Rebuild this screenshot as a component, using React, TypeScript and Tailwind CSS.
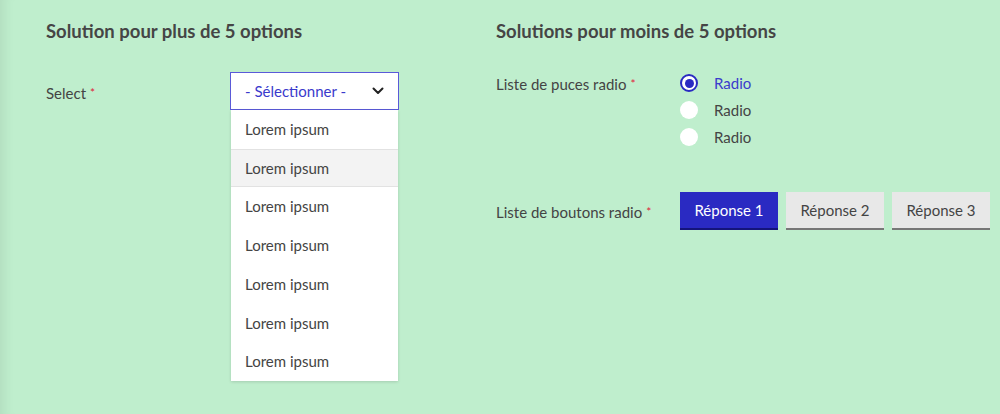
import React from "react";

const font = { fontFamily: "Lato, 'Noto Sans', sans-serif" };

function Req() {
  return <span className="text-[#e0233a] ml-1 text-[12px] align-top">*</span>;
}

export default function App() {
  const items = Array.from({ length: 7 });
  return (
    <div
      style={font}
      className="w-[1000px] h-[414px] bg-[#bfeecd] shadow-[inset_14px_0_12px_-10px_rgba(0,0,0,0.07)] text-[#444] flex overflow-hidden"
    >
      {/* Left column */}
      <div className="w-[450px] pl-[46px] pt-[20px] shrink-0">
        <h2 className="text-[18.5px] font-bold leading-[22px] text-[#454545]">Solution pour plus de 5 options</h2>
        <div className="flex mt-[30px]">
          <div className="w-[184px] pt-[12px] text-[15px] leading-[18px]">
            Select<Req />
          </div>
          <div className="w-[169px]">
            <div className="h-[38px] border border-[#5a5ad8] bg-white flex items-center justify-between pl-[14px] pr-[14px]">
              <span className="text-[15px] text-[#3a3acc]">- Sélectionner -</span>
              <svg width="12" height="8" viewBox="0 0 12 8" fill="none">
                <path d="M1.5 1.5 L6 6 L10.5 1.5" stroke="#222" strokeWidth="2" strokeLinecap="round" strokeLinejoin="round" />
              </svg>
            </div>
            <div className="mx-px bg-white shadow-[0_1px_3px_rgba(0,0,0,0.14)]">
              {items.map((_, i) => (
                <div
                  key={i}
                  className={`h-[38.7px] flex items-center pl-[14px] text-[15px] text-[#444] ${i === 1 ? "bg-[#f3f3f3] border-y border-[#e2e2e2]" : ""}`}
                >
                  Lorem ipsum
                </div>
              ))}
            </div>
          </div>
        </div>
      </div>

      {/* Right column */}
      <div className="pl-[46px] pt-[20px] flex-1">
        <h2 className="text-[18.5px] font-bold leading-[22px] text-[#454545]">Solutions pour moins de 5 options</h2>
        <div className="flex mt-[32px]">
          <div className="w-[184px] text-[15px] leading-[18px] pt-px">
            Liste de puces radio<Req />
          </div>
          <div className="flex flex-col gap-[9px]">
            {[0, 1, 2].map((i) => (
              <div key={i} className="flex items-center h-[18px]">
                {i === 0 ? (
                  <span className="w-[18px] h-[18px] rounded-full bg-white border-2 border-[#2a2ac2] flex items-center justify-center">
                    <span className="w-[9px] h-[9px] rounded-full bg-[#2a2ac2]" />
                  </span>
                ) : (
                  <span className="w-[18px] h-[18px] rounded-full bg-white" />
                )}
                <span className={`ml-[16px] text-[15px] ${i === 0 ? "text-[#3a3acc]" : "text-[#444]"}`}>Radio</span>
              </div>
            ))}
          </div>
        </div>
        <div className="flex items-center mt-[46px]">
          <div className="w-[184px] text-[15px] leading-[18px] pt-[2px]">
            Liste de boutons radio<Req />
          </div>
          <div className="flex gap-[8px]">
            {["Réponse 1", "Réponse 2", "Réponse 3"].map((t, i) => (
              <div
                key={t}
                className={`w-[98px] h-[38px] flex items-center justify-center text-[15px] border-b-2 ${
                  i === 0 ? "bg-[#2a2ac2] text-white border-[#14147a]" : "bg-[#e8e8e8] text-[#444] border-[#777]"
                }`}
              >
                {t}
              </div>
            ))}
          </div>
        </div>
      </div>
    </div>
  );
}
